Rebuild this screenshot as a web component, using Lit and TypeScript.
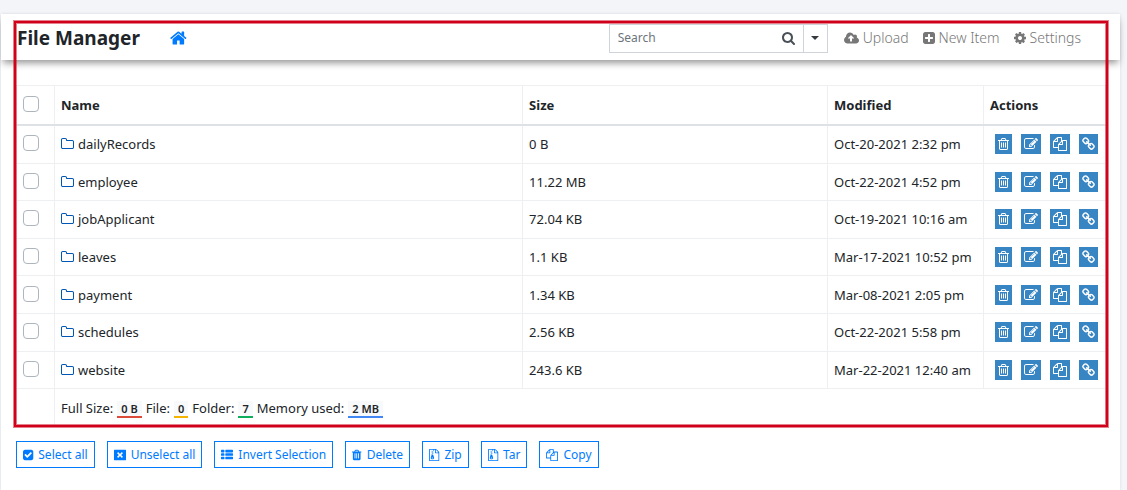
import { LitElement, html, css, svg } from "lit";
import { customElement, property, state } from "lit/decorators.js";

type Glyph = { x: number; w: number; d: string };

const BIN =
  "M672 384h448l-48-117q-7-9-17-11h-317q-10 2-17 11zm928 32v64q0 14-9 23t-23 9h-96v948q0 83-47 143.5t-113 60.5h-832q-66 0-113-58.5t-47-141.5v-952h-96q-14 0-23-9t-9-23v-64q0-14 9-23t23-9h309l70-167q15-37 54-63t79-26h320q40 0 79 26t54 63l70 167h309q14 0 23 9t9 23z";

const ARCHIVE =
  "M1596 380q28 28 48 76t20 88v1152q0 40-28 68t-68 28h-1344q-40 0-68-28t-28-68v-1600q0-40 28-68t68-28h896q40 0 88 20t76 48zm-444-244v376h376q-10-29-22-41l-313-313q-12-12-41-22zm384 1528v-1024h-416q-40 0-68-28t-28-68v-416h-128v128h-128v-128h-512v1536h1280zM512 256h128v128h-128zM640 384h128v128h-128zM512 512h128v128h-128zM640 640h128v128h-128zM781 943l107 349q8 27 8 52 0 83-72.5 137.5t-183.5 54.5-183.5-54.5-72.5-137.5q0-25 8-52 21-63 120-396v-128h128v128h79q22 0 39 13t23 34zm-141 465q53 0 90.5-19t37.5-45-37.5-45-90.5-19-90.5 19-37.5 45 37.5 45 90.5 19z";

const GLYPHS: Record<string, Glyph> = {
  home: { x: 64, w: 1664, d: "M1472 992v480q0 26-19 45t-45 19h-384v-384h-256v384h-384q-26 0-45-19t-19-45v-480q0-1 .5-3t.5-3l575-474 575 474q1 2 1 6zm223-69l-62 74q-8 9-21 11h-3q-13 0-21-7l-692-577-692 577q-12 8-24 7-13-2-21-11l-62-74q-8-10-7-23.5t11-21.5l719-599q32-26 76-26t76 26l244 204v-195q0-14 9-23t23-9h192q14 0 23 9t9 23v408l219 182q10 8 11 21.5t-7 23.5z" },
  search: { x: 64, w: 1664, d: "M1216 832q0-185-131.5-316.5t-316.5-131.5-316.5 131.5-131.5 316.5 131.5 316.5 316.5 131.5 316.5-131.5 131.5-316.5zm512 832q0 52-38 90t-90 38q-54 0-90-38l-343-342q-179 124-399 124-143 0-273.5-55.5t-225-150-150-225-55.5-273.5 55.5-273.5 150-225 225-150 273.5-55.5 273.5 55.5 225 150 150 225 55.5 273.5q0 220-124 399l343 343q37 37 37 90z" },
  upload: { x: -64, w: 1920, d: "M1216 928q0-14-9-23l-352-352q-9-9-23-9t-23 9l-351 351q-10 12-10 24 0 14 9 23t23 9h224v352q0 13 9.5 22.5t22.5 9.5h192q13 0 22.5-9.5t9.5-22.5v-352h224q13 0 22.5-9.5t9.5-22.5zm640 288q0 159-112.5 271.5t-271.5 112.5h-1088q-185 0-316.5-131.5t-131.5-316.5q0-130 70-240t188-165q-2-30-2-43 0-212 150-362t362-150q156 0 285.5 87t188.5 231q71-62 166-62 106 0 181 75t75 181q0 76-41 138 130 31 213.5 135.5t83.5 238.5z" },
  plus: { x: 128, w: 1536, d: "M1408 960v-128q0-26-19-45t-45-19h-320v-320q0-26-19-45t-45-19h-128q-26 0-45 19t-19 45v320h-320q-26 0-45 19t-19 45v128q0 26 19 45t45 19h320v320q0 26 19 45t45 19h128q26 0 45-19t19-45v-320h320q26 0 45-19t19-45zm256-544v960q0 119-84.5 203.5t-203.5 84.5h-960q-119 0-203.5-84.5t-84.5-203.5v-960q0-119 84.5-203.5t203.5-84.5h960q119 0 203.5 84.5t84.5 203.5z" },
  cog: { x: 128, w: 1536, d: "M1152 896q0-106-75-181t-181-75-181 75-75 181 75 181 181 75 181-75 75-181zm512-109v222q0 12-8 23t-20 13l-185 28q-19 54-39 91 35 50 107 138 10 12 10 25t-9 23q-27 37-99 108t-94 71q-12 0-26-9l-138-108q-44 23-91 38-16 136-29 186-7 28-36 28h-222q-14 0-24.5-8.5t-11.5-21.5l-28-184q-49-16-90-37l-141 107q-10 9-25 9-14 0-25-11-126-114-165-168-7-10-7-23 0-12 8-23 15-21 51-66.5t54-70.5q-27-50-41-99l-183-27q-13-2-21-12.5t-8-23.5v-222q0-12 8-23t19-13l186-28q14-46 39-92-40-57-107-138-10-12-10-24 0-10 9-23 26-36 98.5-107.5t94.5-71.5q13 0 26 10l138 107q44-23 91-38 16-136 29-186 7-28 36-28h222q14 0 24.5 8.5t11.5 21.5l28 184q49 16 90 37l142-107q9-9 24-9 13 0 25 10 129 119 165 170 7 8 7 22 0 12-8 23-15 21-51 66.5t-54 70.5q26 50 41 98l183 28q13 2 21 12.5t8 23.5z" },
  folder: { x: 64, w: 1664, d: "M1600 1312v-704q0-40-28-68t-68-28h-704q-40 0-68-28t-28-68v-64q0-40-28-68t-68-28h-320q-40 0-68 28t-28 68v960q0 40 28 68t68 28h1216q40 0 68-28t28-68zm128-704v704q0 92-66 158t-158 66h-1216q-92 0-158-66t-66-158v-960q0-92 66-158t158-66h320q92 0 158 66t66 158v32h672q92 0 158 66t66 158z" },
  trashOutline: { x: 192, w: 1408, d: "M704 736v576q0 14-9 23t-23 9h-64q-14 0-23-9t-9-23v-576q0-14 9-23t23-9h64q14 0 23 9t9 23zm256 0v576q0 14-9 23t-23 9h-64q-14 0-23-9t-9-23v-576q0-14 9-23t23-9h64q14 0 23 9t9 23zm256 0v576q0 14-9 23t-23 9h-64q-14 0-23-9t-9-23v-576q0-14 9-23t23-9h64q14 0 23 9t9 23zm128 724v-948h-896v948q0 22 7 40.5t14.5 27 10.5 8.5h832q3 0 10.5-8.5t14.5-27 7-40.5z" + BIN },
  trash: { x: 192, w: 1408, d: "M704 1376v-704q0-14-9-23t-23-9h-64q-14 0-23 9t-9 23v704q0 14 9 23t23 9h64q14 0 23-9t9-23zm256 0v-704q0-14-9-23t-23-9h-64q-14 0-23 9t-9 23v704q0 14 9 23t23 9h64q14 0 23-9t9-23zm256 0v-704q0-14-9-23t-23-9h-64q-14 0-23 9t-9 23v704q0 14 9 23t23 9h64q14 0 23-9t9-23z" + BIN },
  edit: { x: 0, w: 1792, d: "M888 1184l116-116-152-152-116 116v56h96v96h56zm440-720q-16-16-33 1l-350 350q-17 17-1 33t33-1l350-350q17-17 1-33zm80 594v190q0 119-84.5 203.5t-203.5 84.5h-832q-119 0-203.5-84.5t-84.5-203.5v-832q0-119 84.5-203.5t203.5-84.5h832q63 0 117 25 15 7 18 23 3 17-9 29l-49 49q-14 14-32 8-23-6-45-6h-832q-66 0-113 47t-47 113v832q0 66 47 113t113 47h832q66 0 113-47t47-113v-126q0-13 9-22l64-64q15-15 35-7t20 29zm-96-738l288 288-672 672h-288v-288zm444 132l-92 92-288-288 92-92q28-28 68-28t68 28l152 152q28 28 28 68t-28 68z" },
  copy: { x: 0, w: 1792, d: "M1696 384q40 0 68 28t28 68v1216q0 40-28 68t-68 28h-960q-40 0-68-28t-28-68v-288h-544q-40 0-68-28t-28-68v-672q0-40 20-88t48-76l408-408q28-28 76-48t88-20h416q40 0 68 28t28 68v328q68-40 128-40h416zm-544 213l-299 299h299v-299zm-640-384l-299 299h299v-299zm196 647l316-316v-416h-384v416q0 40-28 68t-68 28h-416v640h512v-256q0-40 20-88t48-76zm956 804v-1152h-384v416q0 40-28 68t-68 28h-416v640h896z" },
  link: { x: 64, w: 1664, d: "M1520 1216q0-40-28-68l-208-208q-28-28-68-28-42 0-72 32 3 3 19 18.5t21.5 21.5 15 19 13 25.5 3.5 27.5q0 40-28 68t-68 28q-15 0-27.5-3.5t-25.5-13-19-15-21.5-21.5-18.5-19q-33 31-33 73 0 40 28 68l206 207q27 27 68 27 40 0 68-26l147-146q28-28 28-67zm-703-705q0-40-28-68l-206-207q-28-28-68-28-39 0-68 27l-147 146q-28 28-28 67 0 40 28 68l208 208q27 27 68 27 42 0 72-31-3-3-19-18.5t-21.5-21.5-15-19-13-25.5-3.5-27.5q0-40 28-68t68-28q15 0 27.5 3.5t25.5 13 19 15 21.5 21.5 18.5 19q33-31 33-73zm895 705q0 120-85 203l-147 146q-83 83-203 83-121 0-204-85l-206-207q-83-83-83-203 0-123 88-209l-88-88q-86 88-208 88-120 0-204-84l-208-208q-84-84-84-204t85-203l147-146q83-83 203-83 121 0 204 85l206 207q83 83 83 203 0 123-88 209l88 88q86-88 208-88 120 0 204 84l208 208q84 84 84 204z" },
  check: { x: 128, w: 1536, d: "M813 1299l614-614q19-19 19-45t-19-45l-102-102q-19-19-45-19t-45 19l-467 467-211-211q-19-19-45-19t-45 19l-102 102q-19 19-19 45t19 45l358 358q19 19 45 19t45-19zm851-883v960q0 119-84.5 203.5t-203.5 84.5h-960q-119 0-203.5-84.5t-84.5-203.5v-960q0-119 84.5-203.5t203.5-84.5h960q119 0 203.5 84.5t84.5 203.5z" },
  close: { x: 0, w: 1792, d: "M64 128h1664q64 0 64 64v1408q0 64-64 64h-1664q-64 0-64-64v-1408q0-64 64-64zM620 460l-164 164 272 272-272 272 164 164 276-272 276 272 164-164-272-272 272-272-164-164-276 272z" },
  list: { x: 0, w: 1792, d: "M96 128h320q96 0 96 96v192q0 96-96 96h-320q-96 0-96-96v-192q0-96 96-96zM96 640h320q96 0 96 96v192q0 96-96 96h-320q-96 0-96-96v-192q0-96 96-96zM96 1152h320q96 0 96 96v192q0 96-96 96h-320q-96 0-96-96v-192q0-96 96-96zM736 128h960q96 0 96 96v192q0 96-96 96h-960q-96 0-96-96v-192q0-96 96-96zM736 640h960q96 0 96 96v192q0 96-96 96h-960q-96 0-96-96v-192q0-96 96-96zM736 1152h960q96 0 96 96v192q0 96-96 96h-960q-96 0-96-96v-192q0-96 96-96z" },
  archive: { x: 128, w: 1536, d: ARCHIVE },
};

@customElement("fm-icon")
export class FmIcon extends LitElement {
  @property() name = "";

  static styles = css`
    :host { display: inline-flex; flex: none; }
    svg { display: block; height: 1em; width: auto; fill: currentColor; fill-rule: evenodd; overflow: visible; }
  `;

  render() {
    const g = GLYPHS[this.name];
    return html`<svg viewBox="${g.x} 0 ${g.w} 1792" aria-hidden="true">${svg`<path d=${g.d}></path>`}</svg>`;
  }
}

const FOLDERS = [
  { name: "dailyRecords", size: "0 B", modified: "Oct-20-2021 2:32 pm" },
  { name: "employee", size: "11.22 MB", modified: "Oct-22-2021 4:52 pm" },
  { name: "jobApplicant", size: "72.04 KB", modified: "Oct-19-2021 10:16 am" },
  { name: "leaves", size: "1.1 KB", modified: "Mar-17-2021 10:52 pm" },
  { name: "payment", size: "1.34 KB", modified: "Mar-08-2021 2:05 pm" },
  { name: "schedules", size: "2.56 KB", modified: "Oct-22-2021 5:58 pm" },
  { name: "website", size: "243.6 KB", modified: "Mar-22-2021 12:40 am" },
];

const ROW_ACTIONS = [
  { icon: "trashOutline", label: "Delete" },
  { icon: "edit", label: "Rename" },
  { icon: "copy", label: "Copy" },
  { icon: "link", label: "Direct link" },
];

const TOTALS = [
  { label: "Full Size:", value: "0 B", tone: "red" },
  { label: "File:", value: "0", tone: "amber" },
  { label: "Folder:", value: "7", tone: "green" },
  { label: "Memory used:", value: "2 MB", tone: "blue" },
];

const BULK_ACTIONS = [
  { icon: "check", label: "Select all" },
  { icon: "close", label: "Unselect all" },
  { icon: "list", label: "Invert Selection" },
  { icon: "trash", label: "Delete" },
  { icon: "archive", label: "Zip" },
  { icon: "archive", label: "Tar" },
  { icon: "copy", label: "Copy" },
];

@customElement("app-root")
export class AppRoot extends LitElement {
  @state() private selected = new Set<string>();

  static styles = css`
    :host {
      display: block;
      box-sizing: border-box;
      min-height: 100vh;
      padding: 14px 7px 0 1px;
      background: #f4f5f8;
      color: #212529;
      font: 13px/20px "Noto Sans", "Open Sans", sans-serif;
    }
    *, *::before { box-sizing: border-box; }
    button, input { font: inherit; color: inherit; margin: 0; }
    button { cursor: pointer; }
    .card {
      position: relative;
      min-height: calc(100vh - 14px);
      background: #fff;
      box-shadow: 0 0 3px rgba(60, 70, 100, 0.14);
    }
    .bar {
      display: flex;
      align-items: center;
      height: 46px;
      padding: 2px 39px 0 16px;
      box-shadow: 0 5px 7px -2px rgba(0, 0, 0, 0.42);
    }
    .title { margin: 0; font-size: 19px; line-height: 28px; font-weight: 700; }
    .home { display: flex; margin-left: 30px; color: #007bff; font-size: 18px; }
    .search { display: flex; height: 29px; margin-left: auto; border: 1px solid #ced4da; color: #495057; }
    .search label { display: flex; align-items: center; padding-right: 8px; font-size: 14px; }
    .search input { width: 172px; padding: 0 8px; border: 0; outline: 0; background: none; font-size: 12px; }
    .search input::placeholder { color: #6c757d; opacity: 1; }
    .search button { display: flex; align-items: center; justify-content: center; width: 24px; padding: 0; border: 0; border-left: 1px solid #ced4da; background: none; }
    .caret { border: 4px solid transparent; border-top-color: #343a40; border-bottom: 0; }
    .menu { display: flex; gap: 14px; margin-left: 16px; }
    .menu a { display: flex; align-items: center; gap: 4px; color: #777; text-decoration: none; font-size: 14px; font-weight: 300; }
    .content { padding: 25px 14px 0 15px; }
    table { width: 100%; height: 342px; border-collapse: collapse; table-layout: fixed; }
    th, td { padding: 0 6px; border: 1px solid #eeeff0; text-align: left; vertical-align: middle; white-space: nowrap; }
    th { height: 39px; border-bottom: 2px solid #dee2e6; font-weight: 700; }
    .c-check { width: 38px; }
    .c-size { width: 28%; }
    .c-date { width: 156px; }
    .c-act { width: 122px; }
    .tick { display: block; appearance: none; width: 16px; height: 16px; margin-bottom: 2px; border: 1px solid #adb5bd; border-radius: 4px; background: #fff; }
    .tick:checked { border-color: #007bff; background: #007bff; }
    .name { display: flex; align-items: center; gap: 4px; color: inherit; text-decoration: none; }
    .name fm-icon { color: #0056b3; font-size: 14px; }
    .actions { display: flex; gap: 9px; padding-left: 5px; }
    .actions button { display: flex; padding: 3px; border: 0; background: #3885c3; color: #fff; font-size: 14px; }
    .totals { display: flex; gap: 4px; }
    .badge { display: inline-block; margin-left: 4px; padding: 0 4px; border-bottom: 2px solid; background: #f8f9fa; font-size: 11px; line-height: 15px; font-weight: 600; }
    .badge.red { border-color: #dd4b39; }
    .badge.amber { border-color: #f4b400; }
    .badge.green { border-color: #0fae5f; }
    .badge.blue { border-color: #4285f4; }
    .bulk { display: flex; flex-wrap: wrap; gap: 12px; margin-top: 14px; }
    .bulk button { display: flex; align-items: center; gap: 5px; height: 27px; padding: 1px 6px 0; border: 1px solid #007bff; background: #fff; color: #007bff; font-size: 12px; }
    .frame { position: absolute; inset: 7px 12px auto 13px; height: 406px; border: 2px solid #d0021b; box-shadow: 0 0 0 1px rgba(208, 2, 27, 0.5), inset 0 0 0 1px rgba(208, 2, 27, 0.5); pointer-events: none; }
  `;

  private toggle(name: string) {
    const next = new Set(this.selected);
    next.has(name) ? next.delete(name) : next.add(name);
    this.selected = next;
  }

  private toggleAll(e: Event) {
    this.selected = new Set((e.target as HTMLInputElement).checked ? FOLDERS.map((f) => f.name) : []);
  }

  render() {
    return html`
      <div class="card">
        <header class="bar">
          <h1 class="title">File Manager</h1>
          <a class="home" href="#" aria-label="Home"><fm-icon name="home"></fm-icon></a>
          <div class="search">
            <label><input type="text" placeholder="Search" aria-label="Search" /><fm-icon name="search"></fm-icon></label>
            <button aria-label="Search options"><span class="caret"></span></button>
          </div>
          <nav class="menu">
            <a href="#"><fm-icon name="upload"></fm-icon>Upload</a>
            <a href="#"><fm-icon name="plus"></fm-icon>New Item</a>
            <a href="#"><fm-icon name="cog"></fm-icon>Settings</a>
          </nav>
        </header>
        <main class="content">
          <table>
            <colgroup><col class="c-check" /><col /><col class="c-size" /><col class="c-date" /><col class="c-act" /></colgroup>
            <thead>
              <tr>
                <th><input class="tick" type="checkbox" aria-label="Select all rows"
                  .checked=${this.selected.size === FOLDERS.length} @change=${this.toggleAll} /></th>
                <th>Name</th><th>Size</th><th>Modified</th><th>Actions</th>
              </tr>
            </thead>
            <tbody>
              ${FOLDERS.map((f) => html`
                <tr>
                  <td><input class="tick" type="checkbox" aria-label=${f.name}
                    .checked=${this.selected.has(f.name)} @change=${() => this.toggle(f.name)} /></td>
                  <td><a class="name" href="#"><fm-icon name="folder"></fm-icon>${f.name}</a></td>
                  <td>${f.size}</td>
                  <td>${f.modified}</td>
                  <td><div class="actions">${ROW_ACTIONS.map((a) => html`
                    <button aria-label=${a.label}><fm-icon name=${a.icon}></fm-icon></button>`)}</div></td>
                </tr>`)}
              <tr>
                <td></td>
                <td colspan="4"><div class="totals">${TOTALS.map((t) => html`
                  <span>${t.label}<span class="badge ${t.tone}">${t.value}</span></span>`)}</div></td>
              </tr>
            </tbody>
          </table>
          <div class="bulk">${BULK_ACTIONS.map((b) => html`
            <button><fm-icon name=${b.icon}></fm-icon>${b.label}</button>`)}</div>
        </main>
        <div class="frame"></div>
      </div>
    `;
  }
}
